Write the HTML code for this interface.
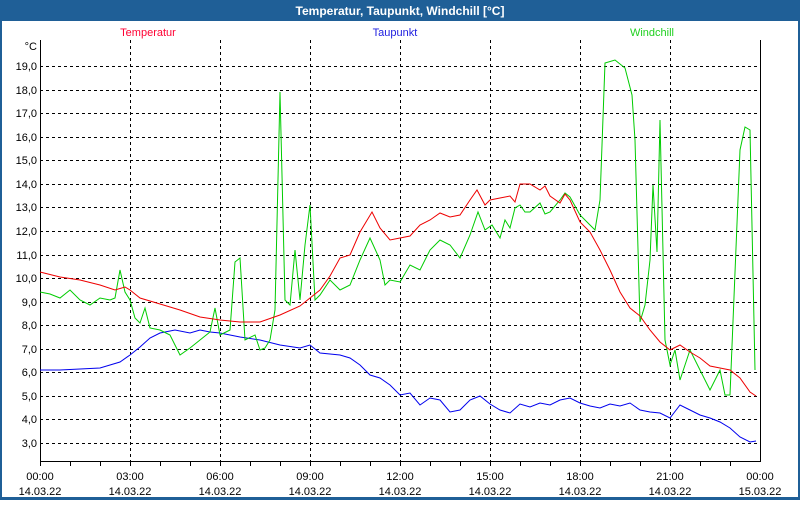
<!DOCTYPE html>
<html><head><style>
body{margin:0;width:800px;height:500px;overflow:hidden;background:#fff;font-family:"Liberation Sans","DejaVu Sans",sans-serif}
</style></head><body>
<svg width="800" height="500" xmlns="http://www.w3.org/2000/svg" font-family="Liberation Sans, DejaVu Sans, sans-serif">
<rect x="0" y="0" width="800" height="500" fill="#1f5f97"/>
<rect x="2" y="21" width="796" height="476" fill="#fff"/>
<text x="400" y="15" fill="#fff" font-size="12" font-weight="bold" text-anchor="middle">Temperatur, Taupunkt, Windchill [°C]</text>
<text x="148" y="36" fill="#ff0033" font-size="11" text-anchor="middle">Temperatur</text>
<text x="395" y="36" fill="#2020e0" font-size="11" text-anchor="middle">Taupunkt</text>
<text x="652" y="36" fill="#20d020" font-size="11" text-anchor="middle">Windchill</text>
<g stroke="#000" stroke-dasharray="3,3" stroke-width="1">
<path d="M40 66.5H760M40 90.5H760M40 113.5H760M40 137.5H760M40 160.5H760M40 184.5H760M40 207.5H760M40 231.5H760M40 255.5H760M40 278.5H760M40 302.5H760M40 325.5H760M40 349.5H760M40 372.5H760M40 396.5H760M40 419.5H760M40 443.5H760"/>
<path d="M130.5 40V461M220.5 40V461M310.5 40V461M400.5 40V461M490.5 40V461M580.5 40V461M670.5 40V461"/>
</g>
<path d="M40.5 40V461.5H760.5V40" fill="none" stroke="#000"/>
<g stroke="#000"><path d="M70.5 461v5M100.5 461v5M130.5 461v5M160.5 461v5M190.5 461v5M220.5 461v5M250.5 461v5M280.5 461v5M310.5 461v5M340.5 461v5M370.5 461v5M400.5 461v5M430.5 461v5M460.5 461v5M490.5 461v5M520.5 461v5M550.5 461v5M580.5 461v5M610.5 461v5M640.5 461v5M670.5 461v5M700.5 461v5M730.5 461v5M40.5 461v5"/></g>
<g font-size="11" fill="#000" text-anchor="end">
<text x="37" y="50">°C</text>
<text x="37" y="70">19,0</text><text x="37" y="94">18,0</text><text x="37" y="117">17,0</text><text x="37" y="141">16,0</text><text x="37" y="164">15,0</text><text x="37" y="188">14,0</text><text x="37" y="211">13,0</text><text x="37" y="235">12,0</text><text x="37" y="259">11,0</text><text x="37" y="282">10,0</text><text x="37" y="306">9,0</text><text x="37" y="329">8,0</text><text x="37" y="353">7,0</text><text x="37" y="376">6,0</text><text x="37" y="400">5,0</text><text x="37" y="423">4,0</text><text x="37" y="447">3,0</text>
</g>
<g font-size="11" fill="#000" text-anchor="middle">
<text x="40" y="480">00:00</text><text x="40" y="495">14.03.22</text>
<text x="130" y="480">03:00</text><text x="130" y="495">14.03.22</text>
<text x="220" y="480">06:00</text><text x="220" y="495">14.03.22</text>
<text x="310" y="480">09:00</text><text x="310" y="495">14.03.22</text>
<text x="400" y="480">12:00</text><text x="400" y="495">14.03.22</text>
<text x="490" y="480">15:00</text><text x="490" y="495">14.03.22</text>
<text x="580" y="480">18:00</text><text x="580" y="495">14.03.22</text>
<text x="670" y="480">21:00</text><text x="670" y="495">14.03.22</text>
<text x="760" y="480">00:00</text><text x="760" y="495">15.03.22</text>
</g>
<g fill="none" stroke-width="1">
<polyline stroke="#0000ee" points="40,370 60,370 80,369 100,368 120,362 130,355 140,347 150,338 160,333 175,330 190,333 200,330 210,332 220,333 240,337 260,340 280,345 300,348 310,345 320,353 340,355 350,358 360,365 370,375 380,378 390,385 400,395 410,393 420,405 430,398 440,400 450,412 460,410 470,400 480,396 490,404 500,410 510,413 520,404 530,407 540,403 550,405 560,400 570,398 580,403 590,406 600,408 610,404 620,406 630,403 640,410 650,412 660,413 670,418 680,405 690,410 700,415 710,418 720,422 730,428 740,437 750,442 756,441"/>
<polyline stroke="#00cc00" points="40,292 50,294 60,298 70,290 80,300 90,305 100,298 110,300 115,298 120,270 125,292 130,300 135,318 140,323 145,308 150,328 160,330 170,335 180,355 190,348 200,340 210,332 215,308 220,335 230,330 235,262 240,258 245,340 255,335 260,350 265,348 270,340 275,310 280,92 285,300 290,305 295,250 300,300 305,245 310,205 315,300 320,295 330,280 340,290 350,285 360,260 370,238 380,260 385,285 390,280 400,282 410,265 420,270 430,250 440,240 450,245 460,258 470,235 478,212 485,230 492,225 500,238 505,220 510,228 515,208 520,205 525,212 530,212 540,203 545,214 550,212 560,200 565,193 570,197 580,215 590,225 595,230 600,200 605,63 615,60 625,68 632,95 635,140 640,322 645,305 650,260 653,185 657,252 660,120 665,340 670,365 675,350 680,380 690,350 700,370 710,390 720,370 725,395 730,395 740,150 745,127 750,130 755,370"/>
<polyline stroke="#ee0000" points="40,272 60,277 80,280 100,285 115,290 125,287 130,290 140,298 160,304 180,310 200,317 220,320 240,322 260,322 280,315 300,306 310,298 320,290 330,276 340,258 350,255 360,232 372,212 380,228 390,240 400,238 410,236 420,225 430,220 440,213 450,217 460,215 470,200 477,190 485,205 490,200 500,198 510,196 515,202 520,184 530,184 540,190 545,186 550,196 560,203 565,194 570,200 580,222 590,232 600,250 610,270 620,292 630,308 640,316 650,330 660,342 670,350 680,345 690,352 700,358 710,366 720,368 730,370 740,378 750,392 756,396"/>
</g>
</svg>
</body></html>
